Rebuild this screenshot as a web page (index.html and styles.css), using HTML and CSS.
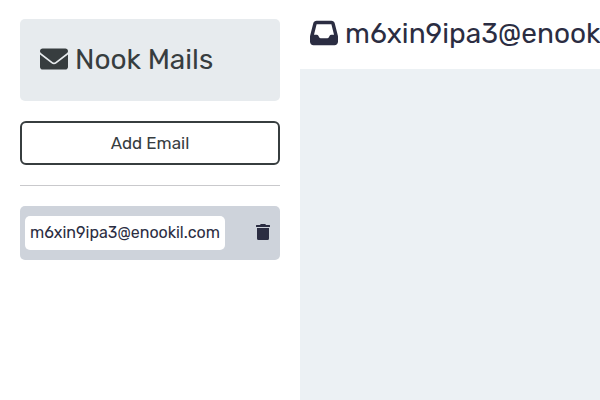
FILE: index.html
```
<!DOCTYPE html>
<html lang="en">
<head>
<meta charset="utf-8">
<title>Nook Mails</title>
<link rel="stylesheet" href="styles.css">
</head>
<body>
<div class="app">
  <aside class="sidebar">
    <header class="brand">
      <svg class="icon-large icon-mail" viewBox="0 0 512 512"><path d="M256 352c-16.53 0-33.06-5.422-47.16-16.41L0 173.2V400C0 426.5 21.49 448 48 448h416c26.51 0 48-21.49 48-48V173.2l-208.8 162.5C289.1 346.6 272.5 352 256 352zM16.29 145.3l212.2 165.1c16.19 12.6 38.87 12.6 55.06 0l212.2-165.1C505.1 137.3 512 125 512 112C512 85.49 490.5 64 464 64h-416C21.49 64 0 85.49 0 112C0 125 6.01 137.3 16.29 145.3z"/></svg>
      <span class="brand-name">Nook Mails</span>
    </header>
    <button class="add-button"><span class="add-label">Add Email</span></button>
    <hr class="divider">
    <div class="mailbox">
      <div class="address"><span class="address-text">m6xin9ipa3@enookil.com</span></div>
      <svg class="icon-trash" viewBox="0 0 448 512"><path d="M135.2 17.69C140.6 6.848 151.7 0 163.8 0H284.2C296.3 0 307.4 6.848 312.8 17.69L320 32H432Q448 32 448 48V80Q448 96 432 96H16Q0 96 0 80V48Q0 32 16 32H128L135.2 17.69zM416 128V464Q416 512 368 512H80Q32 512 32 464V128z"/></svg>
    </div>
  </aside>
  <main class="inbox">
    <header class="inbox-header">
      <svg class="icon-large" viewBox="0 0 512 512"><path d="M121 32C91.6 32 66 52 58.9 80.5L1.9 308.4C.6 313.5 0 318.7 0 323.9V416c0 35.3 28.7 64 64 64H448c35.3 0 64-28.7 64-64V323.9c0-5.2-.6-10.4-1.9-15.5l-57-227.9C446 52 420.4 32 391 32H121zm0 64H391l48 192H387.8c-12.1 0-23.2 6.8-28.6 17.7l-14.3 28.6c-5.4 10.8-16.5 17.7-28.6 17.7H195.8c-12.1 0-23.2-6.8-28.6-17.7l-14.3-28.6c-5.4-10.8-16.5-17.7-28.6-17.7H73L121 96z"/></svg>
      <span class="inbox-title">m6xin9ipa3@enookil.com</span>
    </header>
    <div class="messages"></div>
  </main>
</div>
</body>
</html>
```
FILE: styles.css
```
* { box-sizing: border-box; }

body {
  margin: 0;
  overflow: hidden;
  background: #fff;
  color: #2b2d42;
  font-family: Rubik, Roboto, "Liberation Sans", sans-serif;
  font-size: 16px;
}

.app {
  display: grid;
  grid-template-columns: 300px 300px;
  height: 400px;
}

.sidebar { padding: 19px 20px; }

.brand {
  display: flex;
  align-items: center;
  gap: 7px;
  height: 82px;
  padding: 0 20px;
  border-radius: 5px;
  background: #e7ebee;
  color: #373d3f;
}

svg { display: block; flex: none; fill: currentColor; }
.icon-large { width: 28px; height: 28px; }
.icon-mail { margin-bottom: 2px; }
.icon-trash { width: 14px; height: 16px; margin-bottom: 2px; }

.brand-name {
  font-size: 28px;
  line-height: 34px;
}

.add-button {
  display: block;
  width: 100%;
  height: 44px;
  margin-top: 20px;
  padding: 0;
  border: 2px solid #373d3f;
  border-radius: 6px;
  background: #fff;
  color: #373d3f;
  font: inherit;
}

.add-label { font-size: 17px; }

.divider {
  height: 1px;
  margin: 20px 0;
  border: 0;
  background: #c9c9cc;
}

.mailbox {
  display: flex;
  align-items: center;
  justify-content: space-between;
  height: 54px;
  padding: 0 10px 0 5px;
  border-radius: 5px;
  background: #ced3db;
}

.address {
  display: flex;
  align-items: center;
  width: 200px;
  height: 34px;
  padding: 0 5px 2px;
  border-radius: 5px;
  background: #fff;
}

.address-text { font-size: 16px; white-space: nowrap; }

.inbox {
  display: flex;
  flex-direction: column;
  min-width: 0;
  overflow: hidden;
}

.inbox-header {
  display: flex;
  align-items: center;
  gap: 7px;
  height: 69px;
  padding: 0 10px 3px;
}

.inbox-title { font-size: 28px; white-space: nowrap; }

.messages { flex: 1; background: #ecf1f4; }
```
